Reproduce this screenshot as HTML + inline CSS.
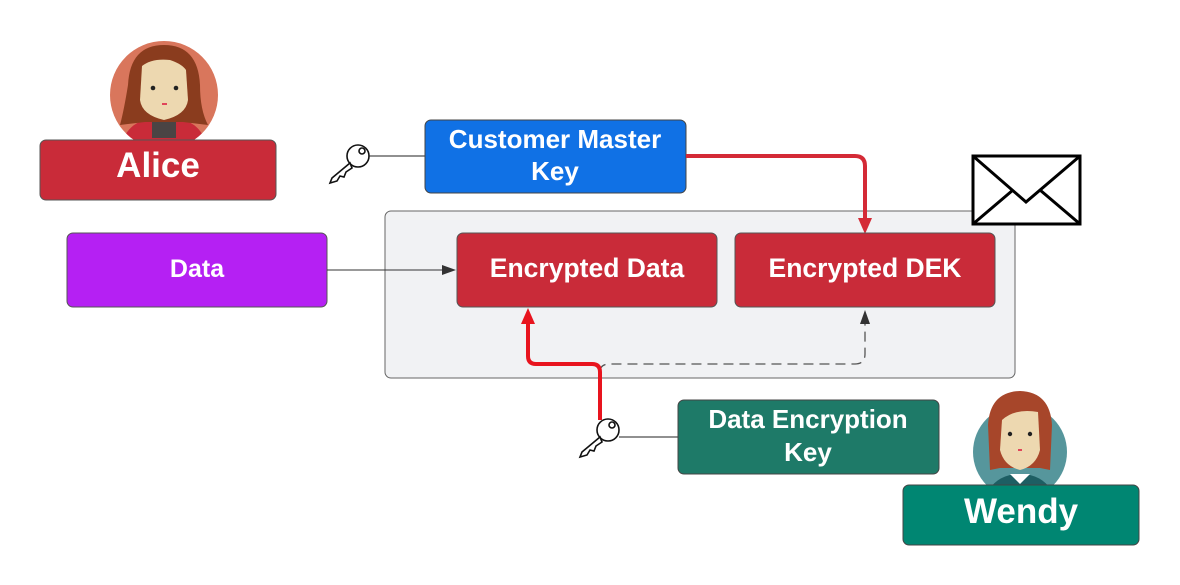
<!DOCTYPE html>
<html><head><style>body{margin:0;background:#fff}svg{display:block}text{font-family:"Liberation Sans",sans-serif;font-weight:bold;fill:#fff;text-anchor:middle}</style></head><body>
<svg width="1180" height="585" viewBox="0 0 1180 585">
<defs>
<clipPath id="ca"><circle cx="164" cy="95" r="54"/></clipPath>
<clipPath id="cw"><circle cx="1020" cy="452" r="47"/></clipPath>
</defs>
<circle cx="164" cy="95" r="54" fill="#d9765c"/>
<g clip-path="url(#ca)">
<path d="M120 150 Q125 125 145 120 L183 120 Q203 125 208 150Z" fill="#c92b39"/>
<rect x="152" y="118" width="24" height="20" fill="#4a4444"/>
</g>
<path d="M164 45 Q130 45 128 85 Q124 110 120 125 L145 122 L183 122 L208 125 Q200 110 200 85 Q198 45 164 45Z" fill="#8a3c1e"/>
<path d="M142 66 Q152 58 170 60 Q182 64 186 70 L188 100 Q186 115 164 120 Q142 115 140 100Z" fill="#edd8b0"/>
<circle cx="153" cy="88" r="2.3" fill="#222"/><circle cx="176" cy="88" r="2.3" fill="#222"/>
<path d="M162 104 h5" stroke="#e0455a" stroke-width="2"/>
<rect x="40" y="140" width="236" height="60" rx="6" fill="#c92b39" stroke="#555"/>
<text x="158" y="177" font-size="35">Alice</text>
<g fill="#fff" stroke="#111" stroke-width="1.6">
<circle cx="358" cy="156" r="11"/>
<path d="M350 163 L332 178 L330 183 L337 181 L340 176 L344 177 L346 172 L352 168Z"/>
<circle cx="362" cy="151" r="3"/>
</g>
<line x1="369" y1="156" x2="425" y2="156" stroke="#222" stroke-width="1"/>
<rect x="425" y="120" width="261" height="73" rx="6" fill="#1071e5" stroke="#444"/>
<text x="555" y="148" font-size="26">Customer Master</text>
<text x="555" y="180" font-size="26">Key</text>
<rect x="385" y="211" width="630" height="167" rx="6" fill="#f1f2f4" stroke="#666"/>
<rect x="973" y="156" width="107" height="68" fill="#fff" stroke="#000" stroke-width="3"/>
<path d="M973 156 L1026 202 L1080 156 M973 224 L1013 190 M1080 224 L1040 190" fill="none" stroke="#000" stroke-width="3"/>
<path d="M686 156 H855 Q865 156 865 166 V222" fill="none" stroke="#d42a36" stroke-width="4"/>
<path d="M858 218 L872 218 L865 234Z" fill="#d42a36"/>
<rect x="67" y="233" width="260" height="74" rx="6" fill="#b520f3" stroke="#555"/>
<text x="197" y="277" font-size="25">Data</text>
<line x1="327" y1="270" x2="446" y2="270" stroke="#333"/>
<path d="M442 265 L456 270 L442 275Z" fill="#333"/>
<rect x="457" y="233" width="260" height="74" rx="6" fill="#c92b39" stroke="#555"/>
<text x="587" y="277" font-size="26.5">Encrypted Data</text>
<rect x="735" y="233" width="260" height="74" rx="6" fill="#c92b39" stroke="#555"/>
<text x="865" y="277" font-size="26.5">Encrypted DEK</text>
<path d="M600 372 Q600 364 610 364 H855 Q865 364 865 354 V322" fill="none" stroke="#555" stroke-width="1.3" stroke-dasharray="10 6"/>
<path d="M860 324 L870 324 L865 310Z" fill="#333"/>
<path d="M600 420 V372 Q600 364 592 364 H536 Q528 364 528 356 V322" fill="none" stroke="#e8141e" stroke-width="4"/>
<path d="M521 324 L535 324 L528 308Z" fill="#e8141e"/>
<g fill="#fff" stroke="#111" stroke-width="1.6">
<circle cx="608" cy="430" r="11"/>
<path d="M600 437 L582 452 L580 457 L587 455 L590 450 L594 451 L596 446 L602 442Z"/>
<circle cx="612" cy="425" r="3"/>
</g>
<line x1="619" y1="437" x2="678" y2="437" stroke="#222"/>
<rect x="678" y="400" width="261" height="74" rx="6" fill="#1e7a68" stroke="#444"/>
<text x="808" y="428" font-size="26">Data Encryption</text>
<text x="808" y="461" font-size="26">Key</text>
<circle cx="1020" cy="452" r="47" fill="#56969c"/>
<g clip-path="url(#cw)">
<path d="M985 500 Q990 480 1010 475 L1030 475 Q1050 480 1055 500Z" fill="#1d5e63"/>
<path d="M1010 474 L1020 484 L1030 474Z" fill="#fff"/>
</g>
<path d="M1020 391 Q990 392 988 425 L990 470 L1000 468 L1040 468 L1050 470 L1052 425 Q1050 392 1020 391Z" fill="#a7462a"/>
<path d="M1002 420 Q1015 408 1038 412 L1040 450 Q1036 466 1020 470 Q1004 466 1000 450Z" fill="#edd8b0"/>
<circle cx="1010" cy="434" r="2.2" fill="#222"/><circle cx="1030" cy="434" r="2.2" fill="#222"/>
<path d="M1018 450 h4" stroke="#e0455a" stroke-width="2"/>
<rect x="903" y="485" width="236" height="60" rx="6" fill="#008672" stroke="#444"/>
<text x="1021" y="523" font-size="35">Wendy</text>
</svg>
</body></html>
